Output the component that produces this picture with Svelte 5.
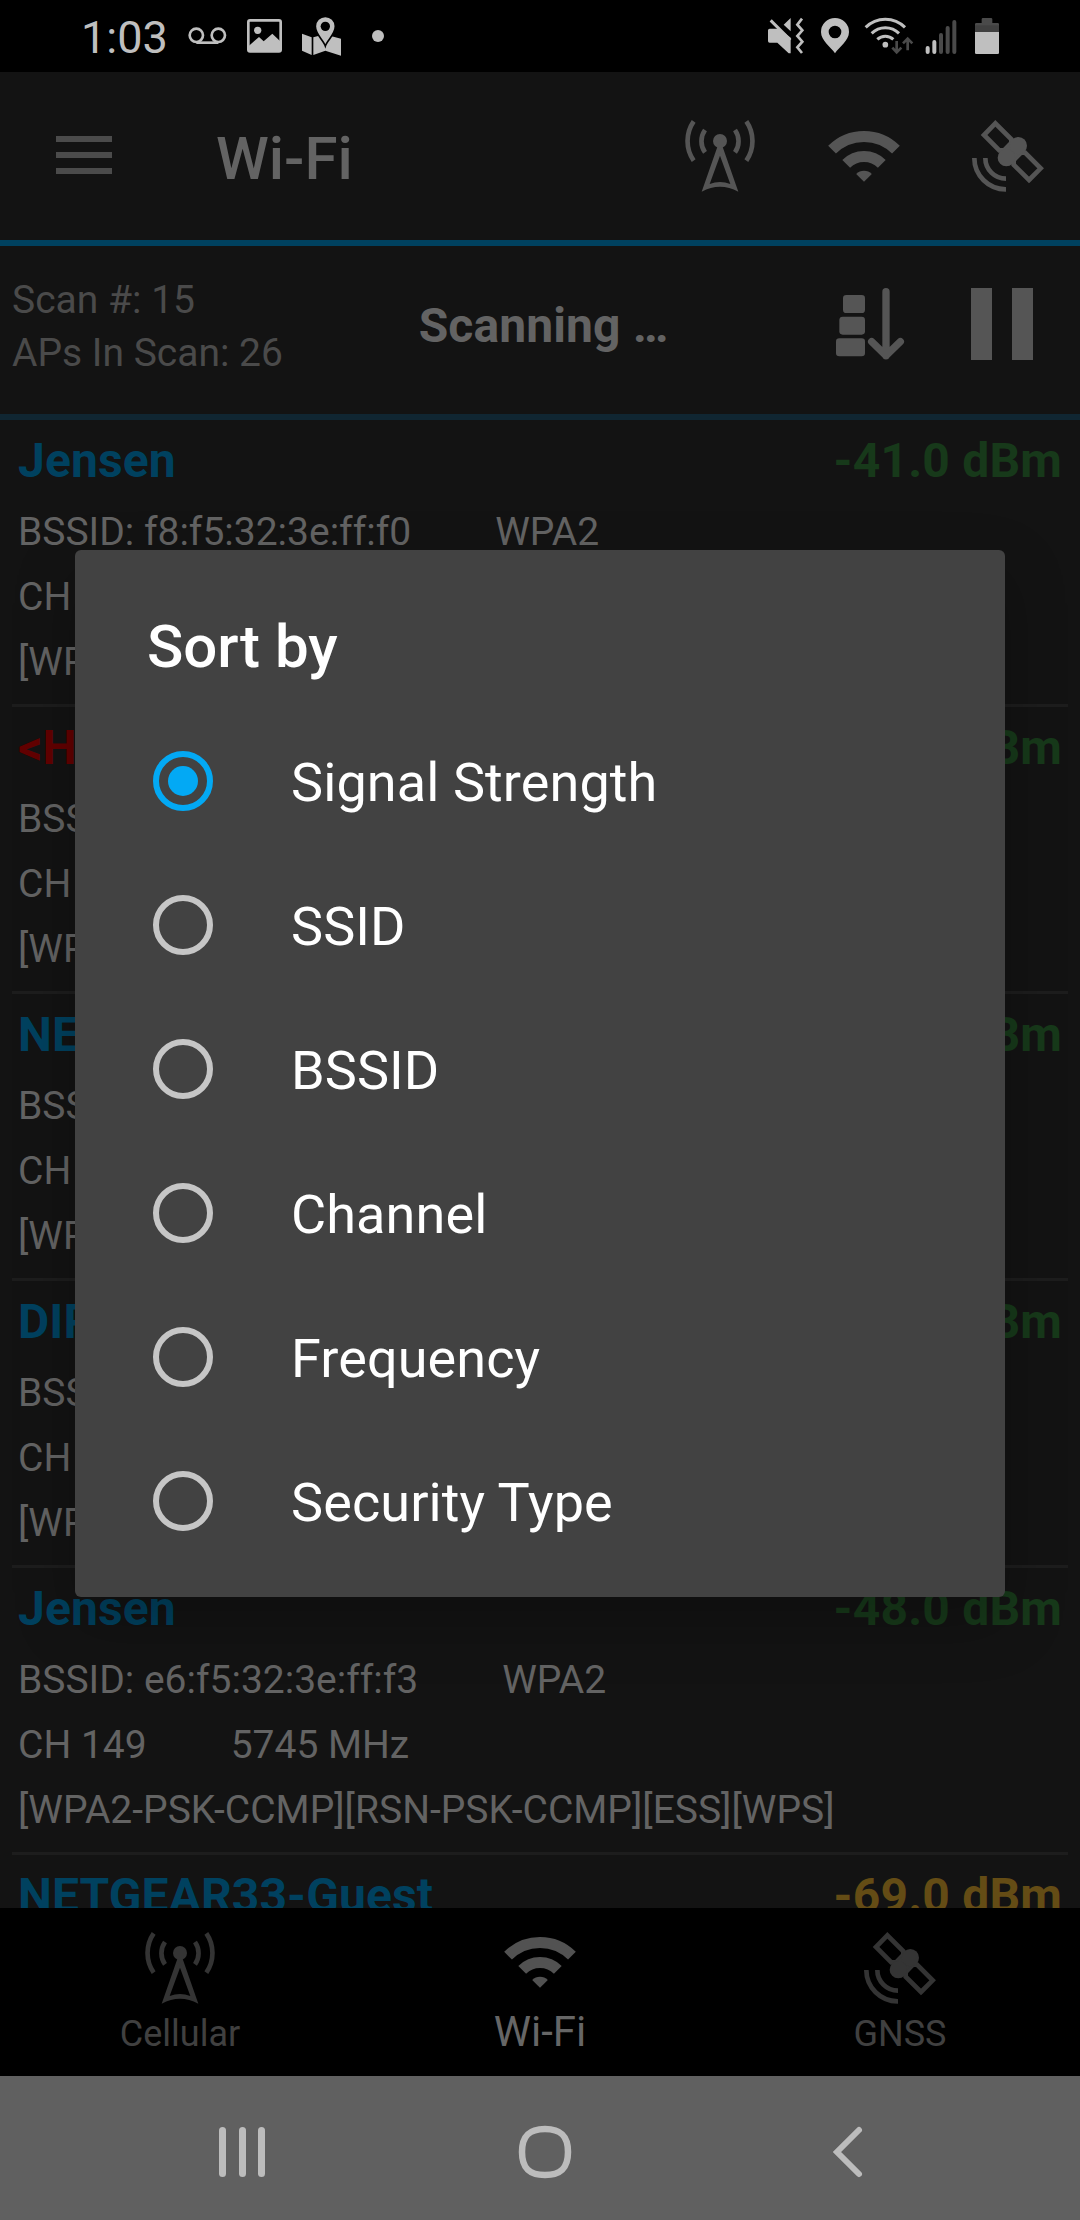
<script>
  const networks = [
    { ssid: 'Jensen', tone: 'known', signal: '-41.0 dBm', level: 'good', bssid: 'f8:f5:32:3e:ff:f0', security: 'WPA2', channel: 'CH 6', frequency: '2437 MHz', caps: '[WPA2-PSK-CCMP][ESS]' },
    { ssid: '<Hidden>', tone: 'hidden', signal: '-42.0 dBm', level: 'good', bssid: 'fa:f5:32:3e:ff:f1', security: 'WPA2', channel: 'CH 6', frequency: '2437 MHz', caps: '[WPA2-PSK-CCMP][ESS]' },
    { ssid: 'NETGEAR33', tone: 'known', signal: '-44.0 dBm', level: 'good', bssid: 'b0:39:56:7a:10:c2', security: 'WPA2', channel: 'CH 11', frequency: '2462 MHz', caps: '[WPA2-PSK-CCMP][ESS]' },
    { ssid: 'DIRECT-TV', tone: 'known', signal: '-46.0 dBm', level: 'good', bssid: 'ae:57:75:12:08:4d', security: 'WPA2', channel: 'CH 11', frequency: '2462 MHz', caps: '[WPA2-PSK-CCMP][ESS]' },
    { ssid: 'Jensen', tone: 'known', signal: '-48.0 dBm', level: 'good', bssid: 'e6:f5:32:3e:ff:f3', security: 'WPA2', channel: 'CH 149', frequency: '5745 MHz', caps: '[WPA2-PSK-CCMP][RSN-PSK-CCMP][ESS][WPS]' },
    { ssid: 'NETGEAR33-Guest', tone: 'known', signal: '-69.0 dBm', level: 'fair', bssid: 'b0:39:56:7a:10:c3', security: 'WPA2', channel: 'CH 11', frequency: '2462 MHz', caps: '[WPA2-PSK-CCMP][ESS]' }
  ];

  const sortOptions = ['Signal Strength', 'SSID', 'BSSID', 'Channel', 'Frequency', 'Security Type'];
  let selected = $state('Signal Strength');
</script>

{#snippet antenna()}
  <svg class="glyph" viewBox="0 0 216 216">
    <circle cx="108" cy="63" r="21" fill="currentColor" />
    <path fill="currentColor" fill-rule="evenodd" d="M101 78L53 215Q108 185 163 215L115 78ZM108 107L77 192Q108 180 139 192Z" />
    <path class="line" stroke-width="14" d="M29 4A104 104 0 0 0 29 122M63 30A58 58 0 0 0 63 97M187 4A104 104 0 0 1 187 122M153 30A58 58 0 0 1 153 97" />
  </svg>
{/snippet}

{#snippet wifi()}
  <svg class="glyph" viewBox="0 0 216 216">
    <path class="line" stroke-width="33" d="M12.2 89.2A135.5 135.5 0 0 1 203.8 89.2M54.6 131.6A75.5 75.5 0 0 1 161.4 131.6" />
    <path fill="currentColor" d="M84.5 162A33 33 0 0 1 131.5 162L108 185.500Z" />
  </svg>
{/snippet}

{#snippet satellite()}
  <svg class="glyph" viewBox="0 0 216 216">
    <path class="line" stroke-width="14" d="M70 10L36 45L82 91L96 91L118 69L118 58ZM171 180L206 145L159 98L147 98L125 120L125 134Z" />
    <path class="line" stroke-width="40" d="M139 77L103 113" />
    <circle cx="139" cy="77" r="26" fill="currentColor" />
    <circle cx="103" cy="113" r="26" fill="currentColor" />
    <path class="line" stroke-width="14" d="M40 114A62 62 0 0 0 102 176M7 114A94 94 0 0 0 102 208" />
  </svg>
{/snippet}

<div class="screen">
  <header class="status">
    <span class="clock">1:03</span>
    <svg class="voicemail" viewBox="384 48 117 120">
      <path class="line" stroke-width="8" d="M409 128H475" />
      <circle class="line" stroke-width="8" cx="409" cy="106" r="20" />
      <circle class="line" stroke-width="8" cx="475" cy="106" r="20" />
    </svg>
    <svg class="picture" viewBox="561 48 105 120">
      <rect class="line" stroke-width="8" x="565" y="61" width="97" height="93" rx="5" />
      <circle cx="593" cy="91" r="11" fill="currentColor" />
      <path fill="currentColor" d="M567 137L597 111L611 124L637 101L660 123V155H567Z" />
    </svg>
    <svg class="map" viewBox="723 48 123 120">
      <path fill="currentColor" d="M726 101L755 112V165L726 152ZM760 112L783 106L796 130V152L760 165ZM796 130L812 108L843 116V167L796 152Z" />
      <path fill="currentColor" stroke="#000" stroke-width="5" d="M796 138C790 120 766 103 766 79A30 30 0 0 1 826 79C826 103 802 120 796 138Z" />
      <circle cx="796" cy="79" r="14" fill="#000" />
    </svg>
    <i class="dot"></i>
    <svg class="tray" viewBox="81 48 702 120">
      <path fill="currentColor" d="M89 86H118L152 113V160H146L112 128H89Q84 128 84 123V91Q84 86 89 86ZM152 54V94L131 74Z" />
      <path class="line" stroke-width="9" d="M92 61L151 120" />
      <path class="line" stroke-width="8" d="M186 56L172 74L187 91L172 108L187 125L172 142L186 159" />
      <path fill="currentColor" fill-rule="evenodd" d="M285 160C272 140 243 122 243 96A42 42 0 0 1 327 96C327 122 298 140 285 160ZM285 77A19 19 0 1 0 285 115A19 19 0 1 0 285 77Z" />
      <path class="line" stroke-width="9" d="M377 82A83 83 0 0 1 495 82M395 100A58 58 0 0 1 477 100M412 118A35 35 0 0 1 460 118" />
      <circle cx="436" cy="134" r="8.500" fill="currentColor" />
      <path class="faint" stroke-width="8" d="M470 123V156M457 143L470 157L484 143M503 151V118M489 130L503 116L517 130" />
      <path class="bars" d="M563 144V156M583 126V156" />
      <path class="bars off" d="M603 105V156M623 84V156M643 66V156" />
      <path fill="#4a4a4a" d="M725 69V58Q725 54 729 54H753Q757 54 757 58V69H773Q777 69 777 73V96H705V73Q705 69 709 69Z" />
      <path fill="#404040" d="M705 76H777V96H705Z" />
      <path fill="currentColor" d="M705 96H777V158Q777 162 773 162H709Q705 162 705 158Z" />
    </svg>
  </header>

  <nav class="appbar">
    <div class="menu"><i></i><i></i><i></i></div>
    <h1>Wi-Fi</h1>
    <div class="actions">
      {@render antenna()}
      {@render wifi()}
      {@render satellite()}
    </div>
  </nav>

  <section class="scanbar">
    <div class="counts"><span>Scan #: 15</span><span>APs In Scan: 26</span></div>
    <strong>Scanning …</strong>
    <div class="controls">
      <svg class="glyph" viewBox="0 0 216 216">
        <g fill="currentColor">
          <rect x="21" y="21" width="66" height="54" rx="10" />
          <rect x="10" y="86" width="77" height="54" rx="10" />
          <rect x="0" y="151" width="87" height="54" rx="10" />
        </g>
        <path class="line rounded" stroke-width="22" d="M150 11V203M107 161L150 203L193 161" />
      </svg>
      <div class="pause"><i></i><i></i></div>
    </div>
  </section>

  <main class="list">
    {#each networks as n}
      <article>
        <div class="top">
          <b class={n.tone}>{n.ssid}</b>
          <b class="signal {n.level}">{n.signal}</b>
        </div>
        <div class="detail"><span>BSSID: {n.bssid}</span><span>{n.security}</span></div>
        <div class="detail"><span>{n.channel}</span><span>{n.frequency}</span></div>
        <div class="detail"><span>{n.caps}</span></div>
      </article>
    {/each}
  </main>

  <footer class="tabs">
    <div class="tab">{@render antenna()}<span>Cellular</span></div>
    <div class="tab active">{@render wifi()}<span>Wi-Fi</span></div>
    <div class="tab">{@render satellite()}<span>GNSS</span></div>
  </footer>

  <footer class="system">
    <div class="recents"><i></i><i></i><i></i></div>
    <svg class="home" viewBox="0 0 54 54">
      <path class="line" stroke-width="6.500" d="M27 4C43 4 50 11 50 27S43 50 27 50S4 43 4 27S11 4 27 4Z" />
    </svg>
    <svg class="back" viewBox="0 0 32 54">
      <path class="line cap" stroke-width="6" d="M27 5L5 27L27 49" />
    </svg>
  </footer>

  <div class="dialog" role="dialog" aria-label="Sort by">
    <h2>Sort by</h2>
    {#each sortOptions as option}
      <button class="option" class:checked={option === selected} onclick={() => (selected = option)}>
        <i class="radio"></i><span>{option}</span>
      </button>
    {/each}
  </div>
</div>

<style>
  :global(body) {
    margin: 0;
    background: #131313;
  }
  .screen {
    position: relative;
    display: flex;
    flex-direction: column;
    width: 1080px;
    height: 2220px;
    overflow: hidden;
    background: #131313;
    font-family: Roboto, sans-serif;
  }
  svg {
    display: block;
    flex: none;
  }
  .line {
    fill: none;
    stroke: currentColor;
  }
  .rounded {
    stroke-linecap: round;
    stroke-linejoin: round;
  }
  .cap {
    stroke-linecap: round;
  }
  .glyph {
    width: 72px;
    height: 72px;
  }
  h1,
  h2 {
    margin: 0;
    font-weight: 500;
    font-size: 60px;
    line-height: 72px;
  }
  h1 {
    padding-top: 5px;
  }

  .status {
    display: flex;
    align-items: center;
    height: 72px;
    box-sizing: border-box;
    padding-left: 81px;
    background: #000;
    color: #bfbfbf;
  }
  .status svg {
    height: 40px;
  }
  .clock {
    width: 107px;
    font-size: 45px;
    line-height: 54px;
    padding-top: 3px;
    box-sizing: border-box;
  }
  .voicemail {
    width: 39px;
  }
  .picture {
    width: 35px;
    margin-left: 20px;
  }
  .map {
    width: 41px;
    margin-left: 19px;
  }
  .dot {
    width: 12px;
    height: 12px;
    margin-left: 30px;
    border-radius: 50%;
    background: currentColor;
  }
  .tray {
    width: 234px;
    margin-left: auto;
    margin-right: 79px;
  }
  .faint {
    fill: none;
    stroke: #4a4a4a;
  }
  .bars {
    fill: none;
    stroke: currentColor;
    stroke-width: 12;
    stroke-linecap: round;
  }
  .off {
    stroke: #4a4a4a;
  }

  .appbar {
    display: flex;
    align-items: center;
    height: 168px;
    box-sizing: content-box;
    border-bottom: 6px solid #00415f;
    color: #636363;
  }
  .menu {
    display: flex;
    flex-direction: column;
    gap: 10px;
    width: 56px;
    margin: 0 104px 2px 56px;
  }
  .menu i {
    height: 6px;
    background: #4b4b4b;
  }
  .actions {
    display: flex;
    gap: 72px;
    margin-left: auto;
    margin-right: 36px;
    color: #555;
  }

  .scanbar {
    display: grid;
    grid-template-columns: 360px 367px 1fr;
    align-items: center;
    height: 168px;
    border-bottom: 6px solid #102632;
    color: #636363;
  }
  .counts {
    display: flex;
    flex-direction: column;
    padding: 0 0 6px 12px;
    font-size: 39px;
    line-height: 53px;
    color: #4a4a4a;
  }
  .scanbar strong {
    text-align: center;
    font-size: 48px;
    font-weight: 700;
    line-height: 56px;
    letter-spacing: 0.1px;
    padding-bottom: 8px;
  }
  .controls {
    display: flex;
    align-items: center;
    gap: 63px;
    margin-left: 109px;
    padding-bottom: 12px;
    color: #555;
  }
  .pause {
    display: flex;
    gap: 20px;
  }
  .pause i {
    width: 21px;
    height: 72px;
    background: currentColor;
  }

  .list {
    height: 1488px;
    flex: none;
    overflow: hidden;
  }
  article {
    height: 284px;
    box-sizing: border-box;
    margin: 0 12px 3px;
    padding: 13px 6px 0;
    box-shadow: 0 3px #1d1d1d;
  }
  .top {
    display: flex;
    justify-content: space-between;
    font-size: 48px;
    line-height: 56px;
    letter-spacing: 0.1px;
    margin-bottom: 11px;
  }
  .signal {
    letter-spacing: 0.2px;
  }
  .known {
    color: #00415f;
  }
  .hidden {
    color: #620000;
  }
  .good {
    color: #17391a;
  }
  .fair {
    color: #644c15;
  }
  .detail {
    display: flex;
    gap: 84px;
    font-size: 39px;
    line-height: 65px;
    white-space: nowrap;
    color: #636363;
  }

  .tabs {
    display: grid;
    grid-template-columns: repeat(3, 1fr);
    height: 168px;
    flex: none;
    background: #000;
  }
  .tab {
    display: flex;
    flex-direction: column;
    align-items: center;
    padding-top: 24px;
    font-size: 36px;
    line-height: 42px;
    color: #343434;
  }
  .tab span {
    margin-top: 9px;
    color: #404040;
  }
  .tab.active {
    padding-top: 18px;
    font-size: 42px;
    line-height: 48px;
    color: #525252;
  }
  .tab.active span {
    margin-top: 10px;
    color: #666;
  }

  .system {
    display: flex;
    align-items: center;
    height: 144px;
    background: #606060;
    color: #bcbcbc;
  }
  .recents {
    display: flex;
    gap: 12.500px;
    margin: 8px 253px 0 219px;
  }
  .recents i {
    width: 7px;
    height: 50px;
    border-radius: 4px;
    background: currentColor;
  }
  .home {
    width: 54px;
    height: 54px;
    margin: 8px 260px 0 0;
  }
  .back {
    width: 32px;
    height: 54px;
    margin-top: 8px;
  }

  .dialog {
    position: absolute;
    left: 75px;
    top: 550px;
    width: 930px;
    height: 1047px;
    box-sizing: border-box;
    padding-top: 61px;
    border-radius: 6px;
    background: #424242;
    color: #fff;
    box-shadow: 0 24px 60px rgba(0, 0, 0, 0.25);
  }
  .dialog h2 {
    padding-left: 72px;
    margin-bottom: 26px;
  }
  .option {
    display: flex;
    align-items: center;
    width: 100%;
    height: 144px;
    padding: 0 0 0 78px;
    border: 0;
    background: none;
    color: inherit;
    font: 54px/64px Roboto, sans-serif;
    letter-spacing: 0.1px;
  }
  .option span {
    margin: 4px 0 0 78px;
  }
  .radio {
    display: grid;
    place-items: center;
    width: 60px;
    height: 60px;
    box-sizing: border-box;
    border: 6px solid #c6c6c6;
    border-radius: 50%;
  }
  .checked .radio {
    border-color: #03a9f4;
  }
  .checked .radio::after {
    content: '';
    width: 30px;
    height: 30px;
    border-radius: 50%;
    background: #03a9f4;
  }
</style>
